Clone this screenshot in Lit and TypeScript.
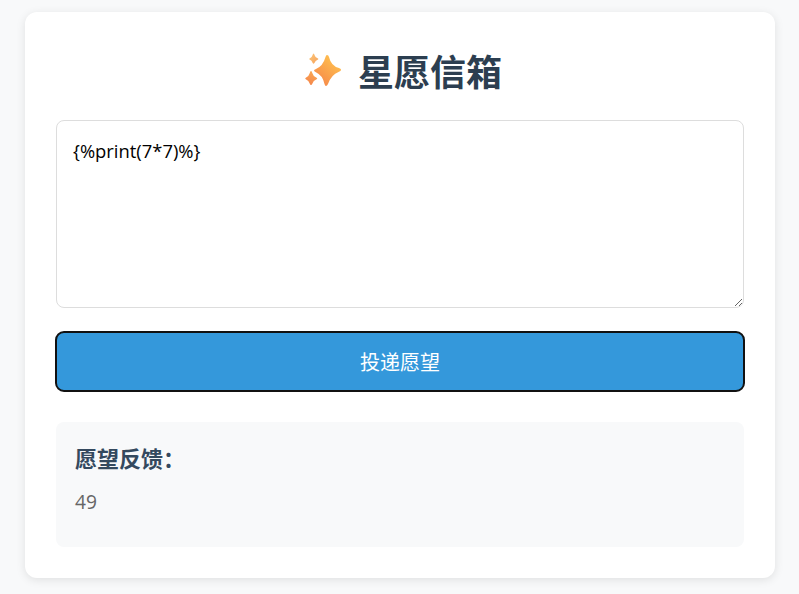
import { LitElement, html, css } from "lit";
import { customElement } from "lit/decorators.js";

@customElement("app-root")
export class AppRoot extends LitElement {
  static styles = css`
    :host {
      display: block;
      box-sizing: border-box;
      min-height: 594px;
      padding: 12px 0 0;
      background: #f8f9fa;
      font-family: "Open Sans", "Noto Sans CJK SC", sans-serif;
    }
    .card {
      box-sizing: border-box;
      width: 750px;
      height: 566px;
      margin: 0 auto;
      padding: 32px 30.5px 30px 31.5px;
      background: #fff;
      border-radius: 12px;
      box-shadow: 0 2px 10px rgba(0, 0, 0, 0.1);
      display: flex;
      flex-direction: column;
    }
    .title {
      margin: 0 0 24px;
      padding-right: 2px;
      display: flex;
      justify-content: center;
      align-items: center;
      gap: 15px;
      height: 52px;
      font-size: 36px;
      font-weight: 700;
      line-height: 52px;
      color: #2c3e50;
      font-family: "Noto Sans CJK SC", sans-serif;
    }
    .spark { width: 47px; height: 40px; display: block; }
    textarea {
      display: block;
      box-sizing: border-box;
      width: 100%;
      height: 188px;
      padding: 16px;
      border: 1px solid #ddd;
      border-radius: 8px;
      font-family: "Open Sans", "Noto Sans CJK SC", sans-serif;
      font-size: 18.4px;
      line-height: 27px;
      color: #000;
      background: #fff;
      outline: none;
      margin: 0 0 24px;
    }
    button {
      display: block;
      box-sizing: border-box;
      width: 100%;
      height: 59px;
      border: none;
      outline: 2px solid #111;
      outline-offset: -1px;
      border-radius: 8px;
      background: #3498db;
      color: #fff;
      font-family: "Noto Sans CJK SC", sans-serif;
      font-size: 20px;
      margin: 0 0 31px;
      padding: 0;
    }
    .result {
      box-sizing: border-box;
      height: 125px;
      padding: 18px 19px;
      background: #f8f9fa;
      border-radius: 8px;
    }
    .result h3 {
      margin: 0 0 14px;
      font-family: "Noto Sans CJK SC", sans-serif;
      font-size: 22px;
      font-weight: 700;
      line-height: 35px;
      color: #34495e;
    }
    .result p {
      margin: 0;
      font-size: 19.2px;
      line-height: 26px;
      color: #666;
    }
  `;

  render() {
    return html`
      <div class="card">
        <h1 class="title">
          <svg class="spark" viewBox="-7 0 47 40" aria-hidden="true">
            <defs>
              <linearGradient id="g" x1="0.8" y1="0.1" x2="0.2" y2="0.9">
                <stop offset="0" stop-color="#ffc14f" />
                <stop offset="1" stop-color="#f68a4a" />
              </linearGradient>
              <linearGradient id="t" x1="0" y1="0" x2="1" y2="1">
                <stop offset="0" stop-color="#fbc678" />
                <stop offset="1" stop-color="#f7a25c" />
              </linearGradient>
              <linearGradient id="h" x1="0.7" y1="0" x2="0.3" y2="1">
                <stop offset="0" stop-color="#fba954" />
                <stop offset="1" stop-color="#f4854a" />
              </linearGradient>
            </defs>
            <path fill="url(#g)" d="M24 5Q25.5 5 26 7Q28 16 36 18Q38.5 19 38 20Q38 21 35.5 22Q28.5 24.5 25 34Q24 36 23 36Q22 36 21.5 34Q19.5 25 12.5 22Q11 21 11 20.5Q11 19.5 13 19Q20 16 22.5 7Q23 5 24 5Z" />
            <path fill="url(#t)" d="M10.5 3.5Q11.2 3.5 11.5 5Q12.2 7.8 15 8.5Q15.8 9 15 9.5Q12.2 10.5 11.4 13Q10.5 14.5 9.7 13Q8.8 10.5 6.6 9.6Q5.6 9 6.6 8.4Q9 7.6 9.6 5Q10 3.5 10.5 3.5Z" />
            <path fill="url(#h)" d="M8 21Q8.8 21 9.3 23Q10.2 26.6 13.6 27.7Q15 28.5 13.6 29.3Q10.2 30.6 9.3 33.8Q8.8 35 8 35Q7.2 35 6.8 33.8Q5.8 30.6 2.8 29.3Q1.5 28.5 2.8 27.7Q5.8 26.6 6.8 23Q7.2 21 8 21Z" />
          </svg>
          <span>星愿信箱</span>
        </h1>
        <textarea .value=${"{%print(7*7)%}"}></textarea>
        <button>投递愿望</button>
        <div class="result">
          <h3>愿望反馈：</h3>
          <p>49</p>
        </div>
      </div>
    `;
  }
}
